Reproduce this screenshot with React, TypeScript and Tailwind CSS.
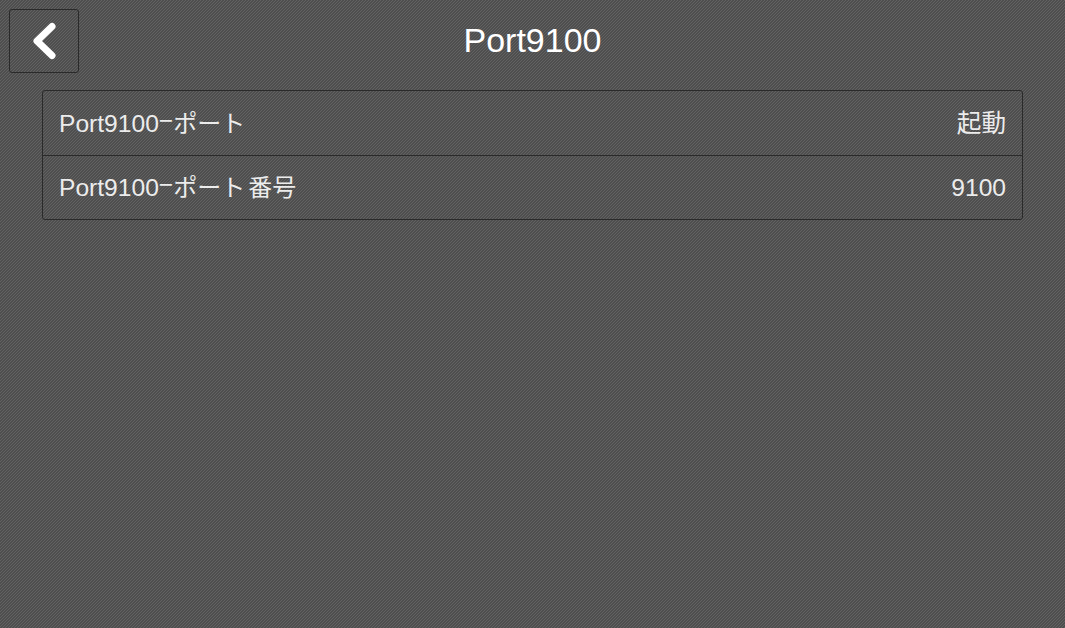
import React from "react";

const rows = [
  { name: "Port9100", rest: "ポート", suffix: "", value: "起動" },
  { name: "Port9100", rest: "ポート", suffix: "番号", value: "9100" },
];

export default function App() {
  return (
    <div className="h-[628px] w-[1065px] overflow-hidden bg-[repeating-linear-gradient(135deg,#626262_0px,#626262_0.7px,#4e4e4e_0.7px,#4e4e4e_2.121px)] font-['Liberation_Sans','Noto_Sans_CJK_JP',sans-serif] text-[#ececec]">
      <header className="relative flex h-[81px] items-center justify-center pb-[1px]">
        <button className="absolute left-[9px] top-[9px] flex h-[64px] w-[70px] items-center justify-center rounded-[3px] border border-[#2a2a2a] text-white">
          <svg width="26" height="38" viewBox="0 0 26 38" fill="none">
            <path d="M21 4.5 L6 19 L21 33.5" stroke="currentColor" strokeWidth="7" strokeLinecap="round" strokeLinejoin="round" />
          </svg>
        </button>
        <h1 className="text-[34px] font-normal leading-none text-white">Port9100</h1>
      </header>
      <div className="mx-[42px] mt-[9px] w-[981px] rounded-[3px] border border-[#2a2a2a]">
        {rows.map((row, i) => (
          <div
            key={row.value}
            className={`flex h-[64px] items-center justify-between px-[16px] pt-[2px] text-[24.6px] ${i > 0 ? "border-t border-[#2a2a2a]" : ""}`}
          >
            <span>
              {row.name}
              <span className="inline-block translate-y-[-3px]">{"\u2212"}</span>
              <span className="text-[24px]">{row.rest}</span>
              {row.suffix && <span className="ml-[3px] text-[24px]">{row.suffix}</span>}
            </span>
            <span>{row.value}</span>
          </div>
        ))}
      </div>
    </div>
  );
}
